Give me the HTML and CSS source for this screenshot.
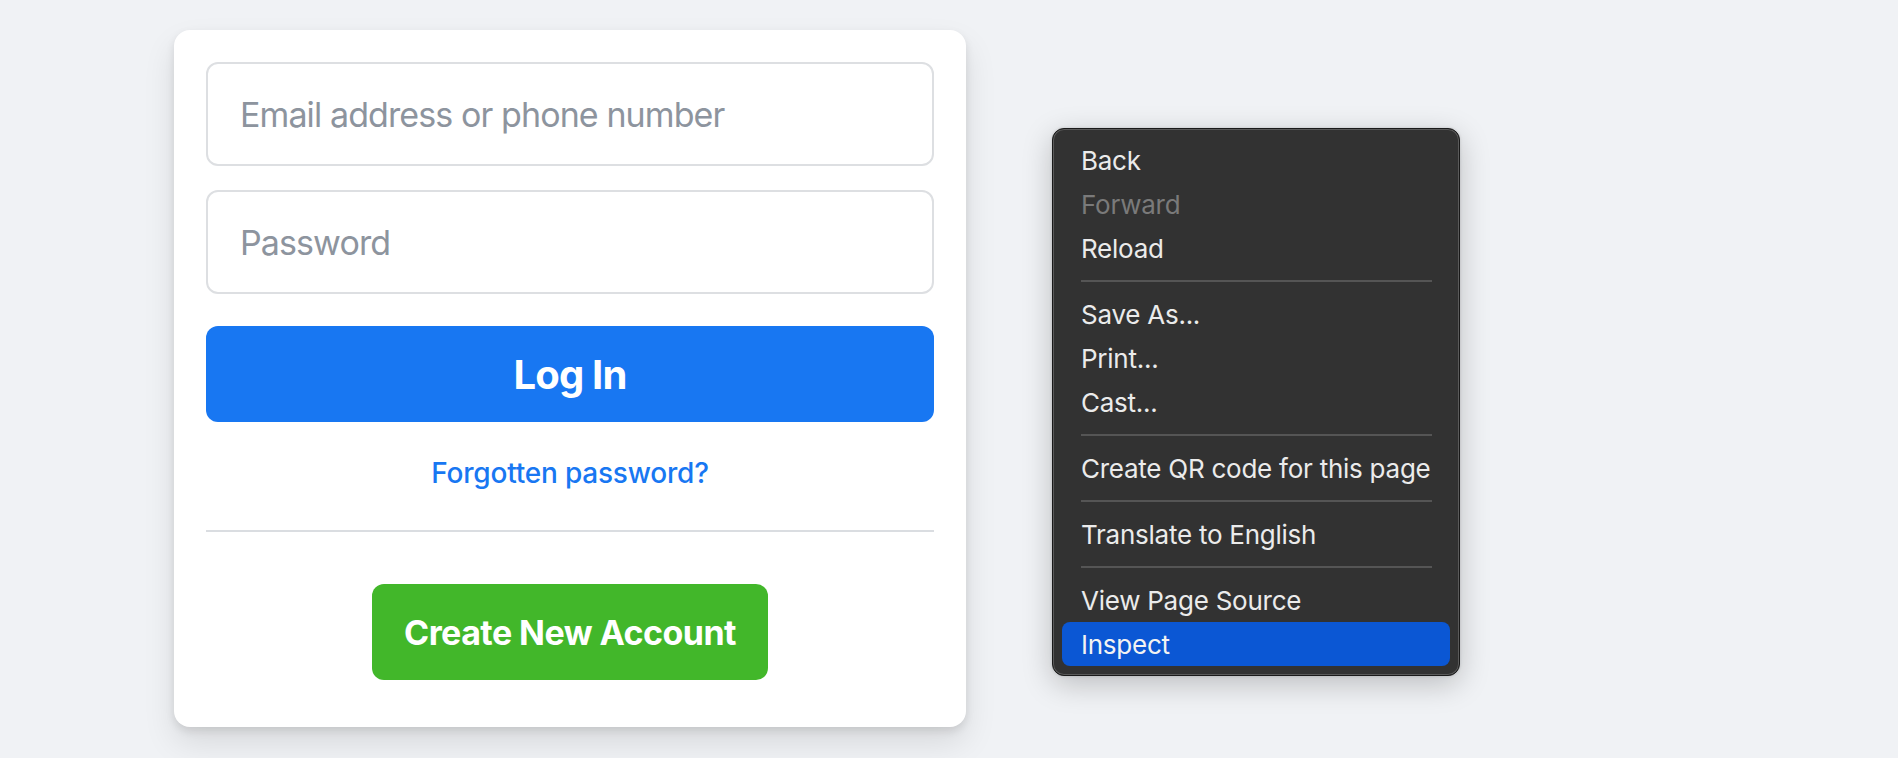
FILE: index.html
```html
<!DOCTYPE html>
<html lang="en">
<head>
<meta charset="utf-8">
<title>Log in</title>
<link rel="stylesheet" href="styles.css">
</head>
<body>
<div class="page">
  <div class="card">
    <form class="login">
      <input class="field" type="text" placeholder="Email address or phone number">
      <input class="field field-pass" type="password" placeholder="Password">
      <button class="btn-login" type="button">Log In</button>
      <div class="forgot"><a href="#">Forgotten password?</a></div>
      <div class="divider"></div>
      <div class="create-wrap"><button class="btn-create" type="button">Create New Account</button></div>
    </form>
  </div>
</div>
<div class="menu">
  <div class="item">Back</div>
  <div class="item disabled">Forward</div>
  <div class="item">Reload</div>
  <div class="sep"></div>
  <div class="item">Save As...</div>
  <div class="item">Print...</div>
  <div class="item">Cast...</div>
  <div class="sep"></div>
  <div class="item">Create QR code for this page</div>
  <div class="sep"></div>
  <div class="item">Translate to English</div>
  <div class="sep"></div>
  <div class="item">View Page Source</div>
  <div class="item active">Inspect</div>
</div>
</body>
</html>
```
FILE: styles.css
```css
html, body {
  margin: 0;
  padding: 0;
}
body {
  background: #f0f2f5;
  font-family: Inter, "Liberation Sans", Arial, sans-serif;
  width: 1898px;
  height: 758px;
  overflow: hidden;
  position: relative;
}
.page {
  display: flex;
  padding: 30px 0 0 174px;
}
.card {
  width: 792px;
  box-sizing: border-box;
  background: #fff;
  border-radius: 16px;
  box-shadow: 0 4px 8px rgba(0,0,0,0.1), 0 16px 32px rgba(0,0,0,0.1);
  padding: 32px 32px 47px;
}
.login {
  display: flex;
  flex-direction: column;
  margin: 0;
}
.field {
  box-sizing: border-box;
  width: 728px;
  height: 104px;
  border: 2px solid #dddfe2;
  border-radius: 12px;
  padding: 0 32px;
  font-family: inherit;
  font-size: 34px;
  letter-spacing: -0.9px;
  color: #1c1e21;
  outline: none;
  background: #fff;
}
.field::placeholder {
  color: #8d949e;
}
.field-pass {
  margin-top: 24px;
}
.btn-login {
  margin-top: 32px;
  height: 96px;
  border: none;
  border-radius: 12px;
  background: #1877f2;
  color: #fff;
  font-family: inherit;
  font-size: 40px;
  font-weight: 700;
  letter-spacing: -0.8px;
  padding: 0;
}
.forgot {
  margin-top: 32px;
  height: 38px;
  line-height: 38px;
  text-align: center;
}
.forgot a {
  color: #1877f2;
  font-size: 28px;
  font-weight: 500;
  letter-spacing: -0.2px;
  text-decoration: none;
}
.divider {
  margin-top: 38px;
  height: 2px;
  background: #dadde1;
}
.create-wrap {
  margin-top: 52px;
  display: flex;
  justify-content: center;
}
.btn-create {
  width: 396px;
  height: 96px;
  border: none;
  border-radius: 12px;
  background: #42b72a;
  color: #fff;
  font-family: inherit;
  font-size: 34px;
  font-weight: 700;
  letter-spacing: -0.55px;
  padding: 0;
}
.menu {
  position: absolute;
  left: 1052px;
  top: 128px;
  width: 408px;
  box-sizing: border-box;
  padding: 9px 9px;
  background: #323232;
  border: 1px solid #1a1a1a;
  border-radius: 12px;
  box-shadow: inset 0 0 0 1px #5a5a5a, 0 8px 30px rgba(0,0,0,0.22), 0 0 3px rgba(0,0,0,0.15);
  display: flex;
  flex-direction: column;
  font-family: Inter, "Liberation Sans", Arial, sans-serif;
}
.item {
  height: 44px;
  line-height: 46px;
  padding: 0 19px;
  font-size: 26px;
  letter-spacing: -0.25px;
  color: #ebebeb;
  border-radius: 8px;
  white-space: nowrap;
}
.item.disabled {
  color: #7a7a7a;
}
.item.active {
  background: #0b57d4;
  color: #f2f2f2;
}
.sep {
  height: 22px;
  display: flex;
  align-items: center;
  padding: 0 19px;
}
.sep::before {
  content: "";
  flex: 1;
  height: 2px;
  background: #555;
  margin-right: -1px;
}
```
